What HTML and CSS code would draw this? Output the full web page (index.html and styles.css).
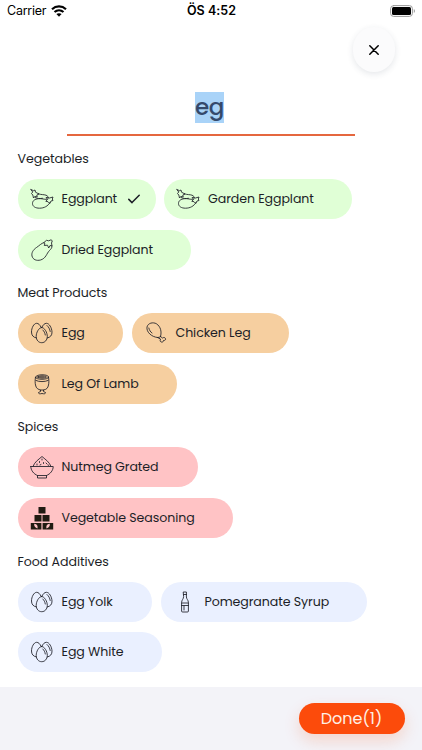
FILE: index.html
```
<!DOCTYPE html>
<html lang="en">
<head>
<meta charset="utf-8">
<meta name="viewport" content="width=device-width, initial-scale=1">
<title>Ingredients</title>
<link rel="stylesheet" href="styles.css">
</head>
<body>
<svg class="defs" aria-hidden="true">
  <symbol id="eggplants" viewBox="0 0 24 24">
    <path d="M1 2.500l2.500 1.200L5 3l.5 2.200L9 7 6.800 8l.4 2-2.400-.6L3.500 11 2.800 8 1.500 6.500l1-1.200zM8.500 6.800c3 1.200 5 .5 7.500 1.400 1.700.6 2.300 1.600 2.300 2.800M5 10.500c2.500 1.200 4.500 1.200 7.500.8M17 12.300c-3.500.3-5-1-8.500-.6C5 12.100 2.500 13.500 2.500 16.500c0 3 3 4.700 7 4.700 4.500 0 8.500-2 10.500-5.700M16.500 10.500l3 .5 3.500-1-.7 2 .7 1.500-2 .5-1.300 2.500-1.700-1.800-2.200-.4 1.500-1.600z"/>
  </symbol>
  <symbol id="eggplant" viewBox="0 0 24 24">
    <path d="M14 4.500C11 5.500 9.500 7.500 6.500 9.500 3 11.800 1.300 15 2 18c.9 3.800 4.700 5 8.500 4 5.500-1.500 6-6.500 9-9.500 1.700-1.700 2.500-2.500 2.500-4.500M14 4.500l2.500-2.200 2.200.5L21 1.800l1.300 1L21.500 5l.5 3-2-.5-1.300 2.500-1.200-2.800-3.200.3.500-1.500z"/>
  </symbol>
  <symbol id="eggs" viewBox="0 0 24 24">
    <path d="M6.500 17C3.300 16.500 1.500 14.300 1.500 11c0-4 2.300-8.700 5.200-8.700 1.700 0 3.200 1.500 4.200 3.700M17.200 17c3.200-.6 4.900-2.700 4.800-6-.2-4.200-2.800-8.700-5.500-8.700-2 0-3.700 1.700-4.700 4.200M11.700 6.500c-2.900 0-5.500 5-5.500 8.900 0 3.600 2.300 6.300 5.500 6.300s5.600-2.700 5.600-6.300c0-3.900-2.700-8.900-5.600-8.900zM12.800 9c1.300 1.200 2.200 3 2.500 5M17 4.500c1.700 1.500 2.900 3.700 3.200 6"/>
  </symbol>
  <symbol id="drumstick" viewBox="0 0 24 24">
    <path d="M16.500 15.500c1.500-5 0-10-4-12.700C9 .8 4 2 3 6c-.8 5 4.500 10 10.500 10.500zM13.500 16.500l3 1.500c-1 2 .2 3.500 1.700 3 1 0 1.300-.8 1.300-1.500 1.500.2 2.500-1 2-2-.4-1-2-1.300-3-.5l-2-1.500M4.800 7c.5 2.200 1.700 4 3.200 5"/>
  </symbol>
  <symbol id="lamb" viewBox="0 0 24 24">
    <path d="M5.500 5c0-3 13-3 13 0s-13 3-13 0c-.5 3-.5 6 0 8 .5 3.500 3 4.500 5 5v1.500l-2 1c0 1.500 1.500 1.500 3.500 1 2 .5 3.500.5 3.500-1l-2-1V18c3-.5 4.500-2 5-5 .5-2 .5-5 0-8M7.500 5c1-1.500 8-1.500 9 0-1 1.500-8 1.500-9 0M10 5h4M6 8.500c3 1.500 9 1.500 12 0M10.500 18h3"/>
  </symbol>
  <symbol id="bowl" viewBox="0 0 24 24">
    <path d="M.8 11.500h22.400c0 4-3 7.500-6.700 9h-9c-3.700-1.500-6.700-5-6.700-9zM3 11.500C4.500 7 8 5 12 1.500 16 5 19.500 7 21 11.500M7.500 20.500V23h9v-2.500M12 4v1M9.500 6.500v1M13.500 7.500v1M16 8l1 1M11 9.500l-1 .5M7 9v1M18 10l.7.3"/>
  </symbol>
  <symbol id="cubes" viewBox="0 0 24 24">
    <path class="solid" d="M8.500 1h7v6.500h-7zM4.500 9H11.500v6.500H4.500zM12.500 9h7v6.500h-7zM.8 17h10.600v6.500H.8zM12.600 17h10.600v6.500H12.600z"/>
    <path class="leaf" d="M4.200 17.800c3 .3 3.800 2.200 3.300 4.700-2.300-.4-3.600-2.400-3.300-4.700zM19.800 17.800c-3 .3-3.800 2.200-3.300 4.700 2.300-.4 3.600-2.400 3.300-4.700z"/>
  </symbol>
  <symbol id="bottle" viewBox="0 0 24 24">
    <path d="M10.600 2h2.800v5c0 2 2 3 2 5.500V21c0 .8-.3 1-1 1H9.600c-.7 0-1-.2-1-1v-8.500c0-2.500 2-3.500 2-5.500zM10.600 4.500h2.800M8.600 13h6.800M8.600 15.500h6.800M11 16v4"/>
  </symbol>
</svg>

<div class="screen">
  <header class="status">
    <div class="carrier"><span>Carrier</span>
      <svg class="wifi" viewBox="0 0 16 12"><path d="M1 4.200c4-3.700 10-3.700 14 0M3.500 7c2.600-2.300 6.400-2.300 9 0"/><path class="dot" d="M5.400 9.100c1.500-1.300 3.700-1.300 5.200 0L8 11.800z"/></svg>
    </div>
    <div class="clock">ÖS 4:52</div>
    <div class="power"><svg class="battery" viewBox="0 0 26 12"><rect class="case" x=".6" y=".6" width="21.800" height="10.800" rx="3"/><rect class="charge" x="2" y="2" width="19" height="8" rx="1.500"/><path class="cap" d="M23.800 4v4c1.500-.6 1.500-3.400 0-4z"/></svg></div>
  </header>

  <div class="toolbar">
    <button class="close" aria-label="Close"><svg viewBox="0 0 10 10"><path d="M.8.8l8.400 8.400M9.200.8L.8 9.200"/></svg></button>
  </div>

  <div class="search"><span class="query">eg</span></div>

  <main class="sections">
    <section class="group vegetables">
      <h2>Vegetables</h2>
      <div class="chips">
        <div class="chip eggplant-chip"><svg class="icon"><use href="#eggplants"/></svg><span>Eggplant</span><svg class="check" viewBox="0 0 12 10"><path d="M.8 5.400l3.200 3.200L11.200 1.200"/></svg></div>
        <div class="chip garden-chip"><svg class="icon"><use href="#eggplants"/></svg><span>Garden Eggplant</span></div>
        <div class="chip dried-chip"><svg class="icon"><use href="#eggplant"/></svg><span>Dried Eggplant</span></div>
      </div>
    </section>
    <section class="group meat">
      <h2>Meat Products</h2>
      <div class="chips">
        <div class="chip egg-chip"><svg class="icon"><use href="#eggs"/></svg><span>Egg</span></div>
        <div class="chip chicken-chip"><svg class="icon"><use href="#drumstick"/></svg><span>Chicken Leg</span></div>
        <div class="chip lamb-chip"><svg class="icon"><use href="#lamb"/></svg><span>Leg Of Lamb</span></div>
      </div>
    </section>
    <section class="group spices">
      <h2>Spices</h2>
      <div class="chips">
        <div class="chip nutmeg-chip"><svg class="icon"><use href="#bowl"/></svg><span>Nutmeg Grated</span></div>
        <div class="chip seasoning-chip"><svg class="icon"><use href="#cubes"/></svg><span>Vegetable Seasoning</span></div>
      </div>
    </section>
    <section class="group additives">
      <h2>Food Additives</h2>
      <div class="chips">
        <div class="chip yolk-chip"><svg class="icon"><use href="#eggs"/></svg><span>Egg Yolk</span></div>
        <div class="chip syrup-chip"><svg class="icon"><use href="#bottle"/></svg><span>Pomegranate Syrup</span></div>
        <div class="chip white-chip"><svg class="icon"><use href="#eggs"/></svg><span>Egg White</span></div>
      </div>
    </section>
  </main>

  <footer class="footer"><button class="done"><span>Done(1)</span></button></footer>
</div>
</body>
</html>
```
FILE: styles.css
```
* { box-sizing: border-box; }
body { margin: 0; background: #fff; color: #1c1e27; font-family: Poppins, Inter, "Noto Sans", sans-serif; }
button { border: 0; padding: 0; font: inherit; }
svg { display: block; flex: none; fill: none; stroke: currentColor; stroke-linecap: round; stroke-linejoin: round; }
.defs { display: none; }
.screen { display: flex; flex-direction: column; width: 422px; height: 750px; overflow: hidden; }

.status { display: grid; grid-template-columns: 1fr auto 1fr; align-items: center; height: 22px; padding: 0 6px 0 7px; color: #000; font: 12.500px/22px Inter, sans-serif; }
.carrier { display: flex; align-items: center; gap: 5px; letter-spacing: -.25px; }
.wifi { width: 16px; height: 12px; stroke-width: 2.200; stroke-linecap: butt; }
.wifi .dot { fill: #000; stroke: none; }
.clock { font-weight: 600; letter-spacing: .05px; }
.power { display: flex; justify-content: flex-end; }
.battery { width: 26px; height: 12px; }
.case { stroke: #999; }
.charge { fill: #000; stroke: none; }
.cap { fill: #999; stroke: none; }

.toolbar { display: flex; justify-content: flex-end; height: 58px; padding: 5px 27px 0 0; }
.close { display: grid; place-items: center; width: 42px; height: 45px; border-radius: 21px; background: #fbfbfc; color: #000; box-shadow: 0 2px 6px rgba(40, 60, 80, .12); }
.close svg { width: 10px; height: 10px; stroke-width: 1.500; }

.search { display: flex; justify-content: center; width: 288px; height: 56px; margin: 0 auto; padding: 12px 3px 0 0; border-bottom: 2px solid #e5673f; }
.query { height: 31px; background: #a9d3f8; color: #34496b; font-size: 23px; font-weight: 500; line-height: 31px; letter-spacing: -.5px; }

.sections { flex: 1; padding: 12px 17.500px 0; }
.group { height: 134.200px; }
h2 { margin: 0 0 10px; font-size: 12.600px; font-weight: 400; line-height: 21px; letter-spacing: -.05px; }
.chips { display: flex; flex-wrap: wrap; gap: 10.800px 8.500px; }
.chip { display: flex; align-items: center; height: 40px; padding-left: 12px; border-radius: 20px; font-size: 12.600px; letter-spacing: -.08px; white-space: nowrap; }
.icon { width: 24px; height: 24px; margin-right: 8px; stroke-width: .85; }
.check { width: 12px; height: 10px; margin-left: auto; margin-right: 15.500px; stroke-width: 1.500; }
.solid { fill: #211b12; stroke: none; }
.leaf { fill: #ffc3c5; stroke: none; }
.vegetables .chip { background: #e0ffd6; }
.meat .chip { background: #f6cfa0; }
.spices .chip { background: #ffc3c5; }
.additives .chip { background: #eaf0ff; }

.eggplant-chip { width: 138px; }
.garden-chip { width: 188px; }
.dried-chip { width: 173.500px; }
.egg-chip { width: 105.500px; }
.chicken-chip { width: 157.500px; }
.lamb-chip { width: 159.500px; }
.nutmeg-chip { width: 180px; }
.seasoning-chip { width: 215.500px; }
.yolk-chip { width: 134.500px; }
.syrup-chip { width: 206.500px; }
.white-chip { width: 144px; }

.footer { display: flex; justify-content: flex-end; height: 63px; padding: 15.500px 17.500px 0 0; background: #f3f3f8; }
.done { width: 106px; height: 31px; border-radius: 16px; background: #fc4b0b; color: #fff0e5; font-size: 16px; line-height: 31px; box-shadow: 0 7px 16px rgba(252, 75, 11, .18); }
```
